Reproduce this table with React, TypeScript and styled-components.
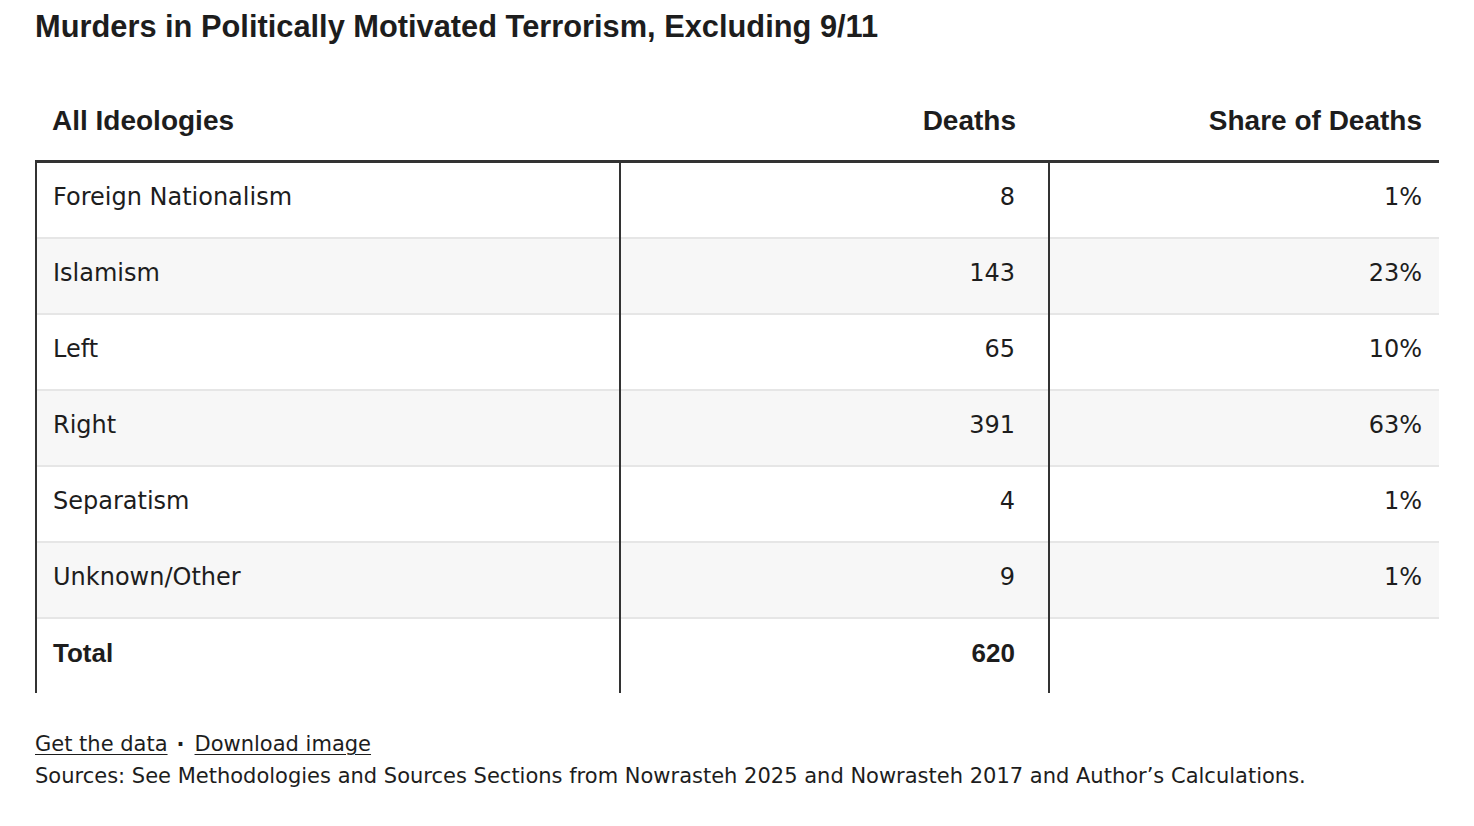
import React from 'react';
import styled, { createGlobalStyle } from 'styled-components';

const rows = [
  { name: 'Foreign Nationalism', deaths: '8', share: '1%' },
  { name: 'Islamism', deaths: '143', share: '23%' },
  { name: 'Left', deaths: '65', share: '10%' },
  { name: 'Right', deaths: '391', share: '63%' },
  { name: 'Separatism', deaths: '4', share: '1%' },
  { name: 'Unknown/Other', deaths: '9', share: '1%' },
];

const GlobalStyle = createGlobalStyle`
  body {
    margin: 0;
    background: #ffffff;
    color: #1d1d1d;
    font-family: "DejaVu Sans", "Liberation Sans", sans-serif;
  }
`;

const boldFont = `"Liberation Sans", Arial, sans-serif`;

const Page = styled.div`
  padding: 9px 35px 0 35px;
  width: 1404px;
`;

const Title = styled.h1`
  margin: 0;
  font-family: ${boldFont};
  font-size: 30.8px;
  line-height: 36px;
  font-weight: 700;
  color: #1d1d1d;
`;

const Table = styled.table`
  margin-top: 47px;
  width: 100%;
  border-collapse: collapse;
  table-layout: fixed;
`;

const HeadCell = styled.th<{ $align: 'left' | 'right'; $padRight: number }>`
  height: 30px;
  padding: 14px ${({ $padRight }) => $padRight}px 24px 16px;
  text-align: ${({ $align }) => $align};
  font-family: ${boldFont};
  font-size: 28px;
  line-height: 30px;
  font-weight: 700;
  color: #1d1d1d;
  border-bottom: 3px solid #333333;
  vertical-align: top;
`;

const Row = styled.tr<{ $striped: boolean }>`
  background: ${({ $striped }) => ($striped ? '#f7f7f7' : '#ffffff')};
  border-bottom: 2px solid #e6e6e6;
`;

const TotalRow = styled.tr`
  background: #ffffff;
`;

const Cell = styled.td<{ $align: 'left' | 'right'; $padRight: number; $bold?: boolean; $last?: boolean }>`
  height: 68px;
  padding: 0 ${({ $padRight }) => $padRight}px 6px 16px;
  text-align: ${({ $align }) => $align};
  font-family: ${({ $bold }) => ($bold ? boldFont : 'inherit')};
  font-size: ${({ $bold }) => ($bold ? 26 : 24)}px;
  line-height: 30px;
  font-weight: ${({ $bold }) => ($bold ? 700 : 400)};
  color: #1d1d1d;
  vertical-align: middle;
  border-left: ${({ $last }) => ($last ? 'none' : '2px solid #333333')};
  border-right: ${({ $last }) => ($last ? 'none' : '2px solid #333333')};
`;

const Footer = styled.div`
  margin-top: 35px;
  font-size: 21px;
  line-height: 32px;
  color: #1d1d1d;
`;

const FooterLink = styled.a`
  color: #1d1d1d;
  text-decoration: underline;
  text-underline-offset: 3px;
  text-decoration-thickness: 1px;
`;

const Dot = styled.span`
  margin: 0 10px 0 9px;
  font-weight: 700;
`;

const App: React.FC = () => {
  return (
    <>
      <GlobalStyle />
      <Page>
        <Title>Murders in Politically Motivated Terrorism, Excluding 9/11</Title>
        <Table>
          <colgroup>
            <col style={{ width: 584 }} />
            <col style={{ width: 429 }} />
            <col />
          </colgroup>
          <thead>
            <tr>
              <HeadCell $align="left" $padRight={16}>All Ideologies</HeadCell>
              <HeadCell $align="right" $padRight={33}>Deaths</HeadCell>
              <HeadCell $align="right" $padRight={17}>Share of Deaths</HeadCell>
            </tr>
          </thead>
          <tbody>
            {rows.map((row, i) => (
              <Row key={row.name} $striped={i % 2 === 1}>
                <Cell $align="left" $padRight={16}>{row.name}</Cell>
                <Cell $align="right" $padRight={33}>{row.deaths}</Cell>
                <Cell $align="right" $padRight={17} $last>{row.share}</Cell>
              </Row>
            ))}
            <TotalRow>
              <Cell $align="left" $padRight={16} $bold>Total</Cell>
              <Cell $align="right" $padRight={33} $bold>620</Cell>
              <Cell $align="right" $padRight={17} $last></Cell>
            </TotalRow>
          </tbody>
        </Table>
        <Footer>
          <div>
            <FooterLink href="#">Get the data</FooterLink>
            <Dot>·</Dot>
            <FooterLink href="#">Download image</FooterLink>
          </div>
          <div>
            Sources: See Methodologies and Sources Sections from Nowrasteh 2025 and Nowrasteh 2017 and Author’s Calculations.
          </div>
        </Footer>
      </Page>
    </>
  );
};

export default App;
